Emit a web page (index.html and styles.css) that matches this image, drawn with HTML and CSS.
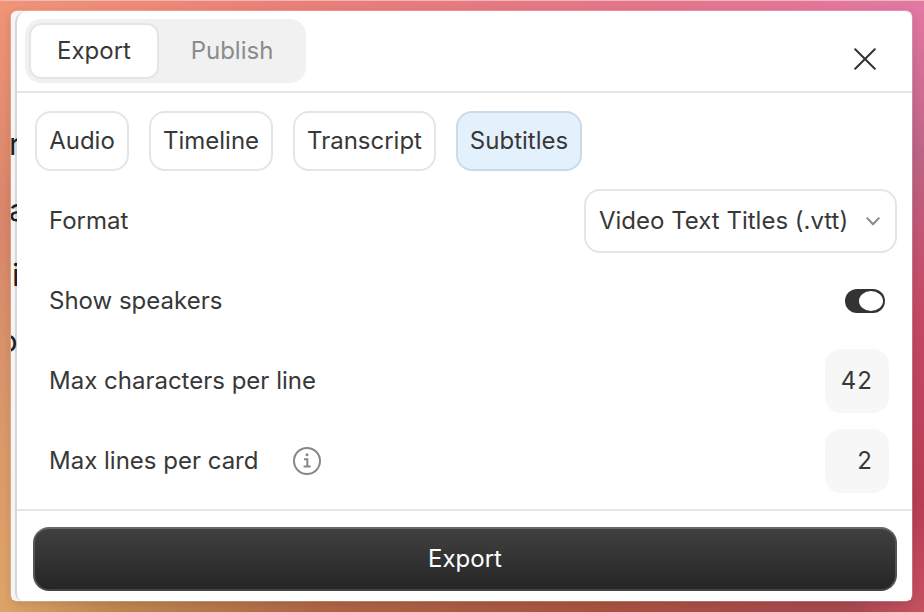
FILE: index.html
```
<!DOCTYPE html>
<html lang="en">
<head>
<meta charset="utf-8">
<title>Export</title>
<link rel="stylesheet" href="styles.css">
</head>
<body>
<div class="desktop">
  <main class="window">
    <div class="document" aria-hidden="true">
      <p class="r">r</p><p class="a">a</p><p class="i">i</p><p class="o">o</p>
    </div>
    <section class="panel">
      <header class="header">
        <div class="tabs">
          <button class="tab active"><span>Export</span></button>
          <button class="tab"><span>Publish</span></button>
        </div>
        <button class="close" aria-label="Close">
          <svg width="22" height="22" viewBox="0 0 22 22" fill="none" stroke="#333" stroke-width="2" stroke-linecap="round"><path d="M1.2 1.2 20.8 20.8M20.8 1.2 1.2 20.8"/></svg>
        </button>
      </header>
      <div class="body">
        <div class="kinds">
          <button class="kind audio">Audio</button>
          <button class="kind timeline">Timeline</button>
          <button class="kind transcript">Transcript</button>
          <button class="kind subtitles selected">Subtitles</button>
        </div>
        <div class="row">
          <span class="label">Format</span>
          <button class="select"><span>Video Text Titles (.vtt)</span>
            <svg width="14" height="9" viewBox="0 0 14 9" fill="none" stroke="#8b8b8b" stroke-width="2" stroke-linecap="round" stroke-linejoin="round"><path d="M1.3 1.3 7 7.2l5.7-5.9"/></svg>
          </button>
        </div>
        <div class="row">
          <span class="label">Show speakers</span>
          <button class="toggle" aria-label="Show speakers"><i></i></button>
        </div>
        <div class="row">
          <span class="label">Max characters per line</span>
          <span class="number">42</span>
        </div>
        <div class="row">
          <span class="label">Max lines per card</span>
          <svg class="info" width="30" height="30" viewBox="0 0 30 30" fill="none" stroke="#888" stroke-width="2"><circle cx="15" cy="15" r="13"/><path d="M12 13.2h3.3v7.3M11.6 20.6h7"/><circle cx="15" cy="8.7" r="1.5" fill="#888" stroke="none"/></svg>
          <span class="number">2</span>
        </div>
      </div>
      <footer class="footer"><button class="submit">Export</button></footer>
    </section>
  </main>
</div>
</body>
</html>
```
FILE: styles.css
```
* { box-sizing: border-box; }
body {
  margin: 0;
  color: #383838;
  font: 24px/30px Inter, "Liberation Sans", sans-serif;
}
button {
  margin: 0;
  padding: 0;
  border: 0;
  background: none;
  color: inherit;
  font: inherit;
  letter-spacing: inherit;
  white-space: nowrap;
}
.desktop {
  width: 924px;
  height: 612px;
  padding: 10px 11px 11px 11px;
  overflow: hidden;
  border-top: 1px solid #efb9bb;
  background:
    linear-gradient(90deg, #f09476, #eb7d79 35%, #e4758b 70%, #e278a4) 0 0 / 924px 12px no-repeat,
    linear-gradient(90deg, #dda469, #bd8850 12%, #ad6545 35%, #a8533f 65%, #a84850 92%, #c45260) 0 bottom / 924px 12px no-repeat,
    linear-gradient(#e278a4, #bd6484 25%, #c34863 52%, #b73d54 82%, #c65062) right 0 / 13px 100% no-repeat,
    linear-gradient(#f09476, #d8866a 35%, #d9956a 62%, #dea468) 0 0 / 12px 100% no-repeat;
}
.window {
  position: relative;
  width: 901px;
  height: 590px;
  overflow: hidden;
  border-radius: 6px;
  background: #f5f5f5;
  box-shadow: 0 2px 8px rgba(60, 20, 20, .15), 0 0 0 .5px rgba(255, 255, 255, .5);
}
.document {
  position: absolute;
  left: 0;
  top: 100px;
  color: #222;
  font-size: 31px;
  line-height: 65.6px;
}
.document p { margin: 0; }
.r { text-indent: -2px; }
.a { text-indent: -2px; }
.i { text-indent: 1px; }
.o { text-indent: -12px; }
.panel {
  position: relative;
  display: flex;
  flex-direction: column;
  height: 590px;
  margin-left: 4px;
  border-left: 2px solid rgba(0, 0, 0, .12);
  border-radius: 12px 10px 8px 8px;
  background: #fff;
  background-clip: padding-box;
}
.header {
  display: flex;
  justify-content: space-between;
  height: 82px;
  padding: 8px 36px 0 8px;
  border-bottom: 2px solid #e5e5e5;
}
.tabs {
  display: flex;
  width: 281px;
  height: 64px;
  padding: 4px;
  border-radius: 16px;
  background: #f1f1f1;
}
.tab {
  width: 130px;
  height: 56px;
  border-radius: 12px;
  color: #8b8b8b;
}
.tab + .tab { width: 146px; }
.tab.active {
  flex-shrink: 0;
  border: 2px solid #e5e5e5;
  background: #fff;
  color: #383838;
}
.tab:not(.active) { flex-shrink: 0; }
.close { align-self: flex-start; height: 22px; margin-top: 29px; line-height: 0; }
.close svg, .select svg { display: block; }
.body { height: 416px; padding: 18px 15px 0 18px; }
.kinds { display: flex; gap: 20px; height: 60px; margin-bottom: 10px; }
.kind { height: 60px; border: 2px solid #e5e5e5; border-radius: 16px; }
.audio { width: 94px; }
.timeline { width: 124px; }
.transcript { width: 143px; }
.subtitles { width: 126px; }
.selected { border-color: #cbdae8; background: #e3f1fd; }
.row { display: flex; align-items: center; height: 80px; padding-left: 14px; }
.label { margin-right: auto; }
.select {
  display: flex;
  align-items: center;
  justify-content: space-between;
  width: 313px;
  height: 64px;
  padding: 0 15px 0 13px;
  border: 2px solid #e5e5e5;
  border-radius: 16px;
}
.toggle {
  width: 40px;
  height: 24px;
  margin-right: 12px;
  padding: 2px;
  border-radius: 12px;
  background: #333;
}
.toggle i { display: block; width: 24px; height: 20px; margin-left: 12px; border-radius: 50%; background: #fff; }
.number {
  width: 64px;
  height: 64px;
  margin-right: 8px;
  padding-right: 16px;
  border-radius: 16px;
  background: #f7f7f7;
  line-height: 64px;
  text-align: right;
  letter-spacing: 1px;
}
.info { margin-right: auto; margin-left: 34px; }
.row:has(.info) .label { margin-right: 0; }
.footer { flex: 1; padding: 16px 15px 0 16px; border-top: 2px solid #e5e5e5; }
.submit {
  width: 100%;
  height: 64px;
  border: 2px solid #555;
  border-top-color: #686868;
  border-bottom-color: #444;
  border-radius: 16px;
  background: linear-gradient(#404040, #262626);
  color: #fff;
}
```
